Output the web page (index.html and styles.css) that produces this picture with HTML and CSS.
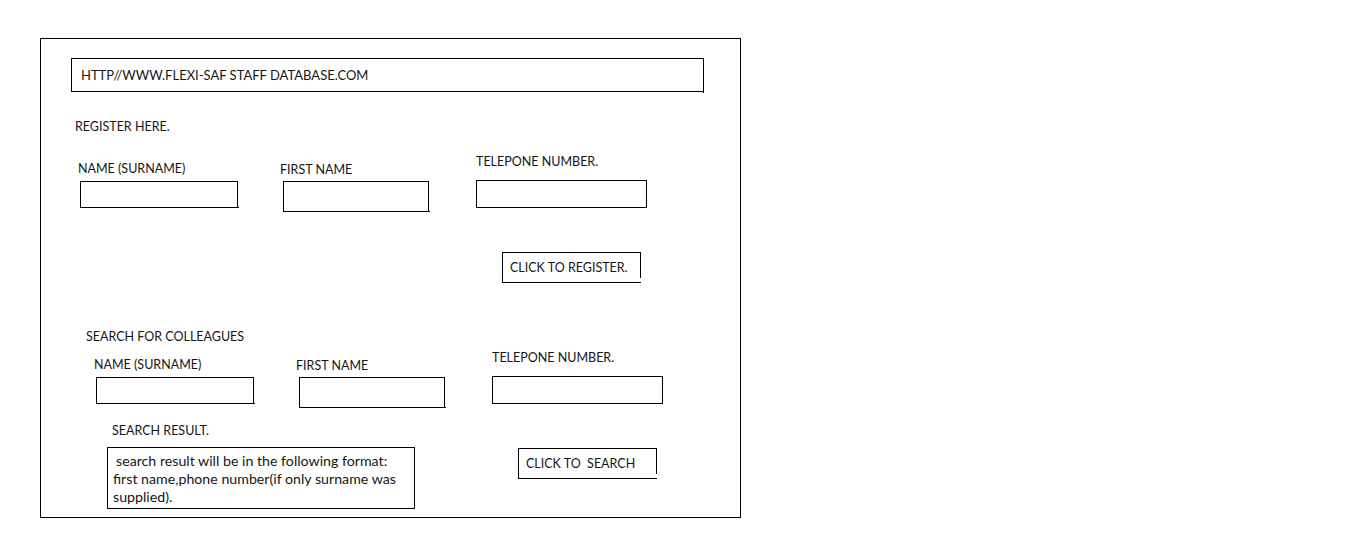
FILE: index.html
```html
<!DOCTYPE html>
<html lang="en">
<head>
<meta charset="utf-8">
<title>Flexi-SAF Staff Database</title>
<link rel="stylesheet" href="styles.css">
</head>
<body>
<div class="frame">
  <div class="url-bar">HTTP//WWW.FLEXI-SAF STAFF DATABASE.COM</div>

  <div class="heading heading-register">REGISTER HERE.</div>

  <div class="fields fields-register">
    <div class="field field-surname">
      <div class="label">NAME (SURNAME)</div>
      <div class="box box-surname"></div>
    </div>
    <div class="field field-first">
      <div class="label">FIRST NAME</div>
      <div class="box box-first"></div>
    </div>
    <div class="field field-phone">
      <div class="label">TELEPONE NUMBER.</div>
      <div class="box box-phone"></div>
    </div>
  </div>

  <div class="button button-register">CLICK TO REGISTER.</div>

  <div class="heading heading-search">SEARCH FOR COLLEAGUES</div>

  <div class="fields fields-search">
    <div class="field field-surname">
      <div class="label">NAME (SURNAME)</div>
      <div class="box box-surname"></div>
    </div>
    <div class="field field-first">
      <div class="label">FIRST NAME</div>
      <div class="box box-first"></div>
    </div>
    <div class="field field-phone">
      <div class="label">TELEPONE NUMBER.</div>
      <div class="box box-phone"></div>
    </div>
  </div>

  <div class="result-row">
    <div class="result-col">
      <div class="label result-label">SEARCH RESULT.</div>
      <div class="result-box"><span class="first-line">search result will be in the following format:</span><br>first name,phone number(if only surname was<br>supplied).</div>
    </div>
    <div class="button button-search">CLICK TO &nbsp;SEARCH</div>
  </div>
</div>
</body>
</html>
```

FILE: styles.css
```css
* { box-sizing: border-box; }

html, body {
  margin: 0;
  padding: 0;
  background: #ffffff;
}

body {
  font-family: Lato, "Liberation Sans", sans-serif;
  font-size: 12.5px;
  line-height: 16px;
  color: #161616;
}

.frame {
  margin: 38px 0 0 40px;
  width: 701px;
  height: 480px;
  border: 1px solid #000;
}

.url-bar {
  position: relative;
  margin: 19px 0 0 30px;
  width: 633px;
  height: 34px;
  border: 1px solid #000;
  display: flex;
  align-items: center;
  padding-left: 9px;
  font-size: 13px;
}
/* hand-drawn overshoot of the right stroke */
.url-bar::after {
  content: "";
  position: absolute;
  right: -1px;
  bottom: -2px;
  width: 1px;
  height: 2px;
  background: #000;
}

.heading { height: 16px; padding-top: 1px; }
.heading-register { margin: 26px 0 0 34px; }
.heading-search { margin: 45px 0 0 45px; }

.fields {
  display: flex;
  align-items: flex-start;
}
.fields-register { margin-left: 39px; }
.fields-search { margin-left: 55px; }

.field {
  display: flex;
  flex-direction: column;
}
.field-surname { margin-top: 26px; }
.field-first { margin-top: 27px; margin-left: 45px; }
.field-phone { margin-top: 19px; margin-left: 47px; }

.fields-search .field-surname { margin-top: 12px; }
.fields-search .field-first { margin-top: 13px; }
.fields-search .field-phone { margin-top: 5px; }

.label { height: 16px; padding-top: 1px; white-space: nowrap; }
.field-surname .label { margin: 0 0 5px -2px; }
.field-first .label { margin: 0 0 4px -3px; }
.field-phone .label { margin: 0 0 11px 0; }

.box { position: relative; border: 1px solid #000; }
.box-surname { width: 158px; height: 27px; }
.box-first { width: 146px; height: 31px; }
.box-phone { width: 171px; height: 28px; }

/* small overshoots of the sketched strokes */
.box-surname::after,
.box-first::after {
  content: "";
  position: absolute;
  right: -2px;
  bottom: -1px;
  width: 1px;
  height: 1px;
  background: #000;
}

.button {
  position: relative;
  width: 139px;
  height: 31px;
  border: 1px solid #000;
  display: flex;
  align-items: center;
  padding-left: 7px;
  white-space: nowrap;
}
/* gap at the lower end of the right stroke */
.button::after {
  content: "";
  position: absolute;
  right: -1px;
  bottom: 0;
  width: 1px;
  height: 4px;
  background: #fff;
}
.button-register { margin: 40px 0 0 461px; }

.result-row {
  display: flex;
  align-items: flex-start;
}
.result-col {
  margin: 14px 0 0 66px;
  display: flex;
  flex-direction: column;
}
.result-label { margin: 0 0 9px 5px; }
.result-box {
  width: 308px;
  height: 62px;
  border: 1px solid #000;
  padding: 4px 0 0 5px;
  font-size: 14.2px;
  line-height: 18px;
  white-space: nowrap;
}
.first-line { padding-left: 3px; }

.button-search { margin: 40px 0 0 103px; }
```
